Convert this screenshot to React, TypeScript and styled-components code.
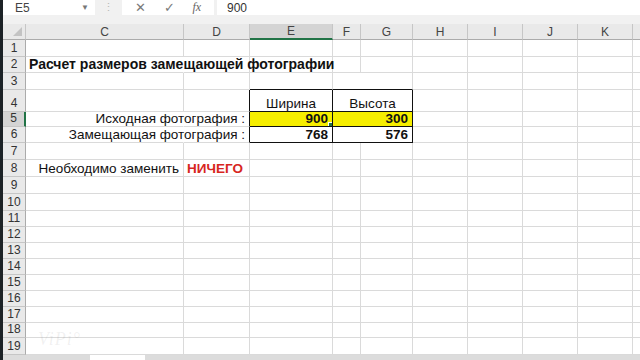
import React from 'react'
import styled, { createGlobalStyle } from 'styled-components'

const GlobalStyle = createGlobalStyle`
  html, body {
    margin: 0;
    padding: 0;
    background: #ffffff;
  }
  body {
    font-family: "Liberation Sans", Arial, sans-serif;
  }
`

const GRID = '#dadada'
const INK = '#111111'
const GREEN = '#217346'

const colWidths = [23, 158, 66, 83, 28, 52, 55, 55, 55, 55, 40]
const colNames = ['C', 'D', 'E', 'F', 'G', 'H', 'I', 'J', 'K', '']
const rowHeights = [17, 16, 17, 22, 15, 16, 17, 17, 17, 17, 16, 16, 16, 16, 16, 16, 16, 15, 17]

const Screen = styled.div`
  width: 640px;
  height: 360px;
  overflow: hidden;
  display: flex;
  position: relative;
`

const DarkStrip = styled.div`
  width: 3px;
  flex-shrink: 0;
  background: #1c2226;
`

const Main = styled.div`
  flex: 1;
  display: flex;
  flex-direction: column;
  min-width: 0;
  background: #f1f1f1;
`

const FormulaBar = styled.div`
  height: 24px;
  display: flex;
  align-items: flex-start;
  flex-shrink: 0;
`

const NameBox = styled.div`
  width: 92px;
  height: 15px;
  background: #fff;
  display: flex;
  align-items: center;
  justify-content: space-between;
  padding: 0 6px 0 12px;
  box-sizing: border-box;
  font-size: 12px;
  color: #444;
`

const Caret = styled.span`
  font-size: 8px;
  color: #777;
`

const Grip = styled.div`
  width: 27px;
  height: 15px;
  display: flex;
  align-items: center;
  justify-content: center;
  color: #b8b8b8;
  font-size: 11px;
`

const ButtonBox = styled.div`
  width: 92px;
  height: 15px;
  background: #fff;
  display: flex;
  align-items: center;
  justify-content: space-around;
  padding: 0 4px;
  box-sizing: border-box;
  color: #7a7a7a;
  font-size: 13px;
`

const Fx = styled.span`
  font-family: "Liberation Serif", serif;
  font-style: italic;
  font-size: 12px;
  color: #666;
`

const FormulaInput = styled.div`
  flex: 1;
  height: 15px;
  margin-left: 3px;
  background: #fff;
  display: flex;
  align-items: center;
  padding-left: 10px;
  font-size: 12px;
  color: #333;
`

const Sheet = styled.div`
  display: grid;
  grid-template-columns: ${colWidths.map((w) => w + 'px').join(' ')};
  grid-template-rows: 16px ${rowHeights.map((h) => h + 'px').join(' ')};
  background: #fff;
  flex-shrink: 0;
`

const Corner = styled.div`
  background: #e9e9e9;
  border-right: 1px solid #c6c6c6;
  border-bottom: 1px solid #ababab;
  box-sizing: border-box;
  position: relative;
  &::after {
    content: '';
    position: absolute;
    right: 3px;
    bottom: 3px;
    border-left: 9px solid transparent;
    border-bottom: 9px solid #c3c3c3;
  }
`

const ColHead = styled.div<{ $active?: boolean }>`
  background: ${(p) => (p.$active ? '#d4d4d4' : '#e9e9e9')};
  border-right: 1px solid #c6c6c6;
  border-bottom: ${(p) => (p.$active ? `2px solid ${GREEN}` : '1px solid #ababab')};
  box-sizing: border-box;
  display: flex;
  align-items: center;
  justify-content: center;
  font-size: 12px;
  color: #444;
`

const RowHead = styled.div<{ $active?: boolean }>`
  background: ${(p) => (p.$active ? '#d4d4d4' : '#e9e9e9')};
  border-right: ${(p) => (p.$active ? `2px solid ${GREEN}` : '1px solid #ababab')};
  border-bottom: 1px solid #c6c6c6;
  box-sizing: border-box;
  display: flex;
  align-items: flex-end;
  justify-content: center;
  font-size: 12px;
  line-height: 15px;
  color: #333;
`

const Cell = styled.div<{
  $span?: number
  $right?: string
  $bottom?: string
  $align?: 'left' | 'right' | 'center'
  $bold?: boolean
  $fill?: string
  $color?: string
  $overflow?: boolean
}>`
  grid-column: span ${(p) => p.$span || 1};
  border-right: 1px solid ${(p) => p.$right || GRID};
  border-bottom: 1px solid ${(p) => p.$bottom || GRID};
  background: ${(p) => p.$fill || '#fff'};
  box-sizing: border-box;
  display: flex;
  align-items: flex-end;
  justify-content: ${(p) =>
    p.$align === 'right' ? 'flex-end' : p.$align === 'center' ? 'center' : 'flex-start'};
  padding: 0 ${(p) => (p.$align === 'right' ? 4 : 3)}px 0 3px;
  font-size: 13.5px;
  line-height: 15px;
  font-weight: ${(p) => (p.$bold ? 700 : 400)};
  color: ${(p) => p.$color || INK};
  white-space: nowrap;
  overflow: ${(p) => (p.$overflow ? 'visible' : 'hidden')};
  position: relative;
  z-index: ${(p) => (p.$overflow ? 1 : 0)};
`

const Title = styled.span`
  font-size: 14px;
`

const FillHandle = styled.span`
  position: absolute;
  right: -3px;
  bottom: -3px;
  width: 5px;
  height: 5px;
  background: ${GREEN};
  border: 1px solid #fff;
  z-index: 2;
`

const BottomBar = styled.div`
  flex: 1;
  display: flex;
  background: #dcdcdc;
  padding-left: 87px;
`

const SheetTab = styled.div`
  width: 55px;
  background: #fff;
`

const Watermark = styled.div`
  position: absolute;
  left: 38px;
  bottom: 10px;
  font-family: "Liberation Serif", serif;
  font-style: italic;
  font-size: 18px;
  color: rgba(150, 150, 150, 0.14);
  letter-spacing: 1px;
  pointer-events: none;
`

type CellSpec = {
  text?: string
  title?: boolean
  span?: number
  right?: string
  bottom?: string
  align?: 'left' | 'right' | 'center'
  bold?: boolean
  fill?: string
  color?: string
  overflow?: boolean
  handle?: boolean
}

const YELLOW = '#f6ee00'

// row number -> specs for columns C..L (merged cells use span)
const specialRows: Record<number, CellSpec[]> = {
  2: [{ text: 'Расчет размеров замещающей фотографии', title: true, bold: true, overflow: true, right: '#fff' }],
  3: [{}, {}, { bottom: INK }, { span: 2, bottom: INK }],
  4: [
    {},
    { right: INK },
    { text: 'Ширина', align: 'center', right: INK, bottom: INK },
    { text: 'Высота', align: 'center', span: 2, right: INK, bottom: INK },
  ],
  5: [
    { right: '#fff' },
    { text: 'Исходная фотография :', align: 'right', overflow: true, right: INK },
    { text: '900', align: 'right', bold: true, fill: YELLOW, right: INK, bottom: INK, handle: true },
    { text: '300', align: 'right', bold: true, fill: YELLOW, span: 2, right: INK, bottom: INK },
  ],
  6: [
    { right: '#fff' },
    { text: 'Замещающая фотография :', align: 'right', overflow: true, right: INK },
    { text: '768', align: 'right', bold: true, right: INK, bottom: INK },
    { text: '576', align: 'right', bold: true, span: 2, right: INK, bottom: INK },
  ],
  8: [
    { text: 'Необходимо заменить', align: 'right' },
    { text: 'НИЧЕГО', bold: true, color: '#d7261e', overflow: true },
  ],
}

function buildRow(row: number): CellSpec[] {
  const specs = specialRows[row] || []
  const out: CellSpec[] = [...specs]
  let used = specs.reduce((n, s) => n + (s.span || 1), 0)
  while (used < colNames.length) {
    out.push({})
    used++
  }
  return out
}

const App: React.FC = () => {
  return (
    <Screen>
      <GlobalStyle />
      <DarkStrip />
      <Main>
        <FormulaBar>
          <NameBox>
            E5
            <Caret>▼</Caret>
          </NameBox>
          <Grip>⋮</Grip>
          <ButtonBox>
            <span>✕</span>
            <span>✓</span>
            <Fx>fx</Fx>
          </ButtonBox>
          <FormulaInput>900</FormulaInput>
        </FormulaBar>
        <Sheet>
          <Corner />
          {colNames.map((c, i) => (
            <ColHead key={i} $active={c === 'E'}>
              {c}
            </ColHead>
          ))}
          {rowHeights.map((_, i) => {
            const row = i + 1
            return (
              <React.Fragment key={row}>
                <RowHead $active={row === 5}>{row}</RowHead>
                {buildRow(row).map((s, j) => (
                  <Cell
                    key={j}
                    $span={s.span}
                    $right={s.right}
                    $bottom={s.bottom}
                    $align={s.align}
                    $bold={s.bold}
                    $fill={s.fill}
                    $color={s.color}
                    $overflow={s.overflow}
                  >
                    {s.title ? <Title>{s.text}</Title> : s.text}
                    {s.handle && <FillHandle />}
                  </Cell>
                ))}
              </React.Fragment>
            )
          })}
        </Sheet>
        <BottomBar>
          <SheetTab />
        </BottomBar>
      </Main>
      <Watermark>ViPi°</Watermark>
    </Screen>
  )
}

export default App
